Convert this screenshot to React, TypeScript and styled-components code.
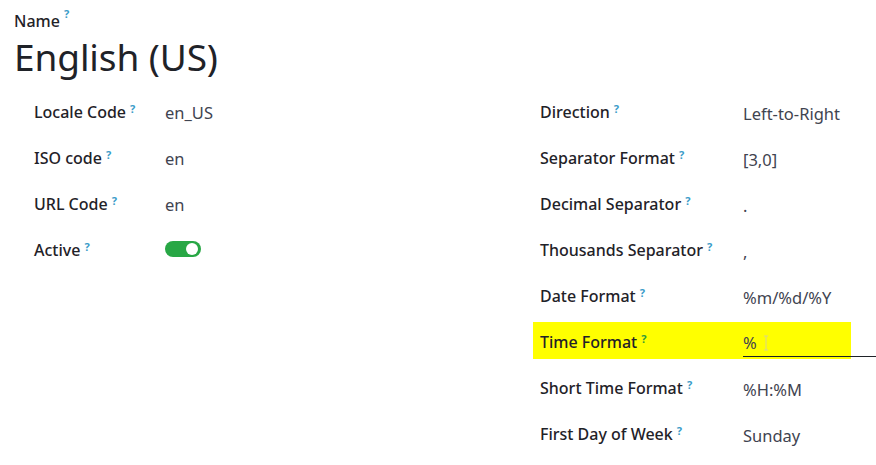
import React from 'react';
import styled, { createGlobalStyle } from 'styled-components';

const colors = {
  label: '#1f2228',
  value: '#3f4450',
  help: '#3a9cc9',
  helpOnMark: '#2f9a3c',
  toggle: '#28a745',
  mark: '#ffff00',
  line: '#1f2228',
};

const GlobalStyle = createGlobalStyle`
  html, body {
    margin: 0;
    padding: 0;
    background: #ffffff;
  }
  body {
    font-family: "Noto Sans", "Open Sans", sans-serif;
    color: ${colors.label};
  }
`;

const Sheet = styled.div`
  width: 876px;
  height: 465px;
  box-sizing: border-box;
  padding: 6px 0 0 14px;
  overflow: hidden;
`;

const NameLabel = styled.div`
  font-size: 16px;
  font-weight: 500;
  line-height: 22px;
`;

const Title = styled.h1`
  margin: 0;
  font-size: 37px;
  font-weight: 400;
  line-height: 50px;
  letter-spacing: -0.1px;
`;

const Columns = styled.div`
  display: grid;
  grid-template-columns: 506px 1fr;
  margin-top: 7px;
`;

const Group = styled.div<{ $labelWidth: number }>`
  display: grid;
  grid-template-columns: ${(p) => p.$labelWidth}px 1fr;
  grid-auto-rows: 46px;
  padding-left: 20px;
  align-items: center;
`;

const Row = styled.div`
  display: contents;
`;

const Label = styled.div<{ $marked?: boolean }>`
  font-size: 16px;
  font-weight: 500;
  line-height: 22px;
  white-space: nowrap;
  align-self: stretch;
  display: flex;
  align-items: center;
  ${(p) =>
    p.$marked &&
    `
    margin-left: -7px;
    padding-left: 7px;
    background: linear-gradient(${colors.mark}, ${colors.mark}) no-repeat 0 3px / 100% 37px;
  `}
`;

const Help = styled.sup<{ $marked?: boolean }>`
  font-size: 11px;
  font-weight: 700;
  color: ${(p) => (p.$marked ? colors.helpOnMark : colors.help)};
  margin-left: 4px;
  position: relative;
  top: -3px;
`;

const Value = styled.div<{ $shift?: number }>`
  font-size: 16.5px;
  line-height: 22px;
  color: ${colors.value};
  white-space: nowrap;
  padding-top: ${(p) => p.$shift ?? 2}px;
`;

const MarkedValue = styled.div`
  align-self: stretch;
  display: flex;
  align-items: stretch;
  background: linear-gradient(${colors.mark}, ${colors.mark}) no-repeat 0 3px / 108px 37px;
`;

const TimeInput = styled.div`
  flex: 1;
  margin-bottom: 8px;
  display: flex;
  align-items: center;
  gap: 6px;
  padding-top: 11px;
  border-bottom: 1px solid ${colors.line};
  font-size: 16.5px;
  line-height: 22px;
  color: ${colors.value};
`;

const Toggle = styled.span`
  display: inline-block;
  position: relative;
  width: 36px;
  height: 16px;
  border-radius: 8px;
  background: ${colors.toggle};
  margin-top: 2px;

  &::after {
    content: '';
    position: absolute;
    right: 3px;
    top: 2px;
    width: 12px;
    height: 12px;
    border-radius: 50%;
    background: #ffffff;
  }
`;

const Caret = () => (
  <svg width="6" height="16" viewBox="0 0 6 16" aria-hidden>
    <path d="M1 1h4M3 1v14M1 15h4" stroke="#d9d48a" strokeWidth="1" fill="none" />
  </svg>
);

const left = [
  { label: 'Locale Code', value: 'en_US' },
  { label: 'ISO code', value: 'en' },
  { label: 'URL Code', value: 'en' },
];

const right = [
  { label: 'Direction', value: 'Left-to-Right' },
  { label: 'Separator Format', value: '[3,0]' },
  { label: 'Decimal Separator', value: '.' },
  { label: 'Thousands Separator', value: ',' },
  { label: 'Date Format', value: '%m/%d/%Y' },
];

const rightTail = [
  { label: 'Short Time Format', value: '%H:%M' },
  { label: 'First Day of Week', value: 'Sunday' },
];

const App: React.FC = () => (
  <>
    <GlobalStyle />
    <Sheet>
      <NameLabel>
        Name<Help>?</Help>
      </NameLabel>
      <Title>English (US)</Title>
      <Columns>
        <Group $labelWidth={131}>
          {left.map((f) => (
            <Row key={f.label}>
              <Label>
                {f.label}
                <Help>?</Help>
              </Label>
              <Value>{f.value}</Value>
            </Row>
          ))}
          <Row>
            <Label>
              Active<Help>?</Help>
            </Label>
            <div>
              <Toggle />
            </div>
          </Row>
        </Group>
        <Group $labelWidth={203}>
          {right.map((f) => (
            <Row key={f.label}>
              <Label>
                {f.label}
                <Help>?</Help>
              </Label>
              <Value $shift={4}>{f.value}</Value>
            </Row>
          ))}
          <Row>
            <Label $marked>
              Time Format<Help $marked>?</Help>
            </Label>
            <MarkedValue>
              <TimeInput>
                %<Caret />
              </TimeInput>
            </MarkedValue>
          </Row>
          {rightTail.map((f) => (
            <Row key={f.label}>
              <Label>
                {f.label}
                <Help>?</Help>
              </Label>
              <Value $shift={4}>{f.value}</Value>
            </Row>
          ))}
        </Group>
      </Columns>
    </Sheet>
  </>
);

export default App;
